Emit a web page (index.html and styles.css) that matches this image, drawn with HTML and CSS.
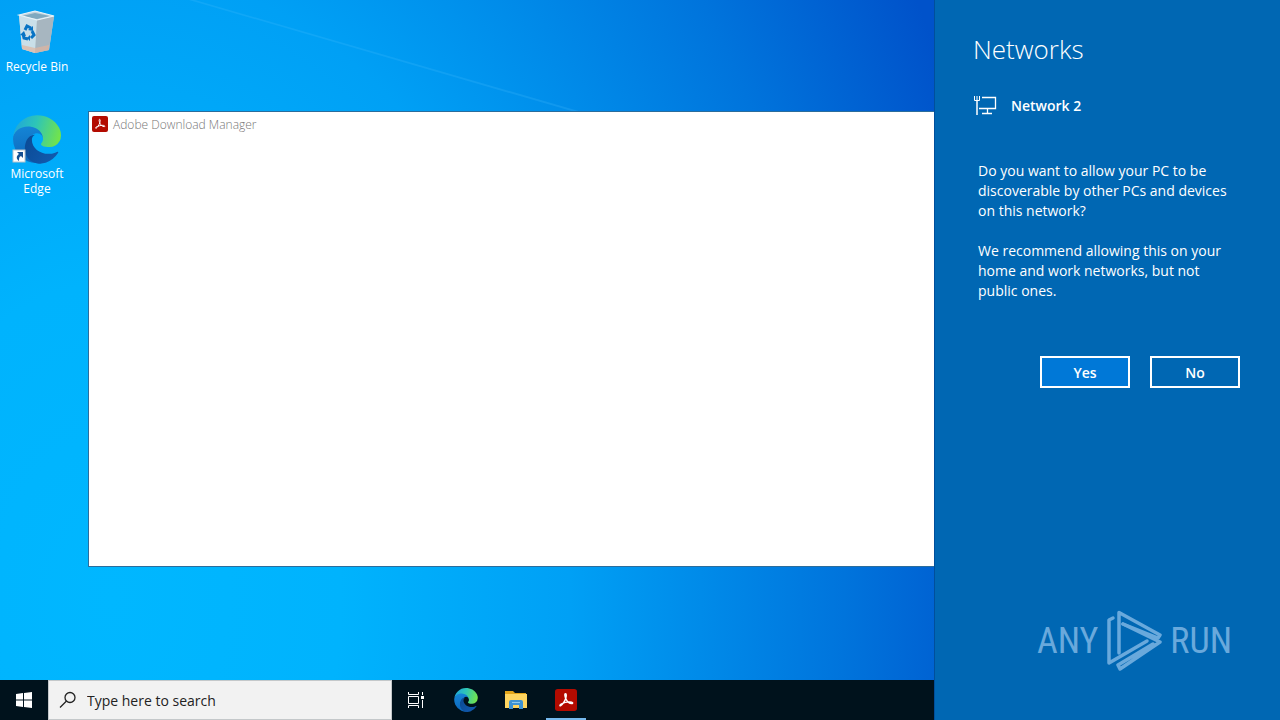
FILE: index.html
```
<!DOCTYPE html>
<html lang="en">
  <head>
    <meta charset="UTF-8" />
    <meta name="viewport" content="width=device-width, initial-scale=1.0" />
    <title>Networks</title>
    <link rel="stylesheet" href="styles.css">
  </head>
  <body>
    <!-- shared icon shapes -->
    <svg class="defs" width="0" height="0" aria-hidden="true">
      <defs>
        <linearGradient id="edgeGreen" x1="0" y1="0.3" x2="1" y2="0.5">
          <stop offset="0" stop-color="#1fa5dc" />
          <stop offset="0.45" stop-color="#2dc5b8" />
          <stop offset="1" stop-color="#72e34c" />
        </linearGradient>
        <linearGradient id="edgeBlue" x1="0.3" y1="0" x2="0.4" y2="1">
          <stop offset="0" stop-color="#1587d8" />
          <stop offset="1" stop-color="#0d66ba" />
        </linearGradient>
        <linearGradient id="edgeNavy" x1="0" y1="0" x2="1" y2="0.5">
          <stop offset="0" stop-color="#0b4a94" />
          <stop offset="1" stop-color="#1159ad" />
        </linearGradient>
        <symbol id="edge" viewBox="0 0 256 260">
          <path fill="url(#edgeBlue)" d="M105.730 241.420a79.200 79.200 0 0 1-22.740-21.340 80.720 80.720 0 0 1 29.530-120c3.120-1.470 8.450-4.130 15.540-4a32.350 32.350 0 0 1 25.690 13 31.880 31.880 0 0 1 6.360 18.660c0-.210 24.460-79.600-80-79.600-43.900 0-80 41.660-80 78.210a130.150 130.150 0 0 0 12.110 56 128 128 0 0 0 156.380 67.110 75.550 75.550 0 0 1-62.780-8z" />
          <path fill="url(#edgeNavy)" d="M235.680 195.460a93.730 93.730 0 0 1-10.540 4.710 101.870 101.870 0 0 1-35.900 6.460c-47.320 0-88.540-32.550-88.540-74.320A31.480 31.480 0 0 1 117.130 105c-42.800 1.800-53.800 46.400-53.800 72.530 0 73.880 68.090 81.370 82.760 81.370 7.910 0 19.840-2.300 27-4.560l1.310-.44a128.340 128.340 0 0 0 66.600-52.800 4 4 0 0 0-5.320-5.640z" />
          <path fill="url(#edgeGreen)" d="M152.330 148.860c-.81 1.050-3.300 2.500-3.300 5.660 0 2.610 1.700 5.120 4.720 7.230 14.380 10 41.490 8.680 41.560 8.680a59.560 59.560 0 0 0 30.270-8.350A61.380 61.380 0 0 0 256 109.190c.26-22.410-8-37.310-11.340-43.910C223.460 23.840 177.720 0 128 0A128 128 0 0 0 0 126.200c.48-36.540 36.800-66.050 80-66.050 3.500 0 23.460.34 42 10.070 16.340 8.580 24.900 18.940 30.850 29.210 6.180 10.670 7.280 24.150 7.280 29.520s-2.740 13.330-7.800 19.910z" />
        </symbol>
        <symbol id="acrobat" viewBox="0 0 24 24">
          <rect width="24" height="24" rx="3" fill="#b30b00" />
          <path fill="none" stroke="#fff" stroke-width="1.500" stroke-linejoin="round" d="M11.500 5c-1.300 0-.8 3.200.4 5.800 1.400 3 4 5.200 6.300 5.200 2 0 1.200-2-2-2-3.600 0-7.200 1-9.600 2.400-1.800 1-1.500 2.300-.5 2 1.700-.5 4.600-5 5.700-8.600C12.500 7.300 12.600 5 11.500 5z" />
        </symbol>
      </defs>
    </svg>

    <div class="screen">
      <main class="desktop">
        <svg class="ray" viewBox="0 0 420 120" aria-hidden="true">
          <path d="M24 0L410 112h7L30 0z" fill="#4fc3ff" opacity="0.2" />
        </svg>

        <div class="shortcuts">
          <a class="shortcut" href="#">
            <svg width="48" height="48" viewBox="0 0 48 48" aria-hidden="true">
              <path d="M6 6L22 2l19 5-5 34-14 3-13-4z" fill="#c4d2da" />
              <path d="M6 6l18 5-2 33-13-4z" fill="#c9dfe9" />
              <path d="M24 11l17-4-5 34-14 3z" fill="#a7b6c0" />
              <path d="M9 7l13-3 15 3-13 3z" fill="#7fa9bf" />
              <path d="M6 6L22 2l19 5-17 4z" fill="none" stroke="#e9f5fa" stroke-width="1.200" />
              <path d="M9 36l13 3 14-3v5l-14 3-13-4z" fill="#e0b5a0" opacity="0.7" />
              <g fill="none" stroke="#0873c4" stroke-width="3">
                <path d="M12 21l2-4 4 2" />
                <path d="M19 22l2 4-3 3" />
                <path d="M15 30l-4-1-1-4" />
              </g>
              <path d="M20 17v5l-5-1zM17 26v6l-3-3zM7 26l4-4 2 5z" fill="#0873c4" />
            </svg>
            <span>Recycle Bin</span>
          </a>
          <a class="shortcut" href="#">
            <svg width="50" height="50" viewBox="0 0 50 50" aria-hidden="true">
              <use href="#edge" x="1" y="1" width="48" height="49" />
              <rect x="1" y="36" width="12" height="12" fill="#fff" stroke="#b9c4cc" />
              <path d="M5 38h6v6l-2-2c-2 1-2 2-2 5-3-2-3-5 0-7z" fill="#164f91" />
            </svg>
            <span>Microsoft Edge</span>
          </a>
        </div>

        <section class="window">
          <header class="title-bar">
            <svg width="16" height="16" aria-hidden="true"><use href="#acrobat" width="16" height="16" /></svg>
            <span>Adobe Download Manager</span>
          </header>
        </section>
      </main>

      <nav class="taskbar" aria-label="Taskbar">
        <button class="start" aria-label="Start">
          <svg width="16" height="16" viewBox="0 0 16 16" fill="#fff" aria-hidden="true">
            <path d="M0 2l7-1v6.500H0zM8 1l8-1v7.500H8zM0 8.500h7V15l-7-1zM8 8.500h8V16l-8-1z" />
          </svg>
        </button>
        <label class="search">
          <svg width="18" height="18" viewBox="0 0 18 18" fill="none" stroke="#222" stroke-width="1.300" aria-hidden="true">
            <circle cx="11" cy="6.500" r="5" />
            <path d="M7.500 10L1 16.500" />
          </svg>
          <input type="text" placeholder="Type here to search" aria-label="Type here to search">
        </label>
        <div class="tasks">
          <button class="task" aria-label="Task View">
            <svg width="18" height="18" viewBox="0 0 18 18" fill="none" stroke="#fff" aria-hidden="true">
              <path d="M1.500 1v2.500h10V1M1.500 17v-2.500h10V17M1.500 5.500h10v7h-10zM15.500 1v3M15.500 9v8" />
              <path d="M14 5h3v3h-3z" fill="#fff" stroke="none" />
            </svg>
          </button>
          <button class="task" aria-label="Microsoft Edge">
            <svg width="24" height="24" aria-hidden="true"><use href="#edge" width="24" height="24" /></svg>
          </button>
          <button class="task" aria-label="File Explorer">
            <svg width="22" height="20" viewBox="0 0 22 20" aria-hidden="true">
              <path d="M0 1h8l2 2h11v5H0z" fill="#e3a51a" />
              <path d="M0 4h22v14H0z" fill="#ffd560" />
              <path d="M4 19v-7q0-2 2-2h10q2 0 2 2v7h-4v-4H8v4z" fill="#3e92d2" />
              <path d="M7 12.500h8" stroke="#8cc8ee" />
            </svg>
          </button>
          <button class="task active" aria-label="Adobe Download Manager">
            <svg width="22" height="22" aria-hidden="true"><use href="#acrobat" width="22" height="22" /></svg>
          </button>
        </div>
      </nav>

      <aside class="panel">
        <h1>Networks</h1>
        <h2>
          <svg width="24" height="22" viewBox="0 0 24 22" fill="none" stroke="#fff" aria-hidden="true">
            <path d="M1.500 1v4.500h5V1M4 1v4" />
            <path d="M4 5v15" stroke-width="1.500" />
            <path d="M9 2.500h13.500v11H6M14.500 13.500v5M9 18.500h10" stroke-width="1.300" />
          </svg>
          Network 2
        </h2>
        <div class="message">
          <p>Do you want to allow your PC to be discoverable by other PCs and devices on this network?</p>
          <p>We recommend allowing this on your home and work networks, but not public ones.</p>
        </div>
        <div class="actions">
          <button class="primary">Yes</button>
          <button>No</button>
        </div>
        <div class="brand">
          <span>ANY</span>
          <svg width="56" height="62" viewBox="0 0 56 62" fill="none" stroke="currentColor" stroke-width="3.500" stroke-linecap="round" stroke-linejoin="round" aria-hidden="true">
            <path d="M13 43V2.500L54 25l-2 3L17 14" />
            <path d="M7 8L3 10v43l38-22" />
            <path d="M17 14l37 18-40 27-2-4 35-21" />
          </svg>
          <span>RUN</span>
        </div>
      </aside>
    </div>
  </body>
</html>
```

FILE: styles.css
```
* {
  box-sizing: border-box;
}
body {
  margin: 0;
  font-family: "Open Sans", "Noto Sans", sans-serif;
  font-size: 12px;
}
button, input {
  font-family: inherit;
}
.defs {
  position: absolute;
}
.screen {
  display: grid;
  grid-template-columns: 1fr 346px;
  grid-template-rows: 1fr 40px;
  min-height: 100vh;
}

/* desktop */
.desktop {
  position: relative;
  overflow: hidden;
  background: radial-gradient(ellipse 98% 185% at 12% 88%, #00b7ff 0%, #00b3fd 25%, #00a0f5 50%, #0074dc 80%, #0052ca 100%);
}
.ray {
  position: absolute;
  top: 0;
  left: 165px;
  width: 420px;
}
.shortcuts {
  display: flex;
  flex-direction: column;
  gap: 40px;
  width: 74px;
  padding-top: 9px;
}
.shortcut {
  display: flex;
  flex-direction: column;
  align-items: center;
  gap: 2px;
  color: #fff;
  line-height: 15px;
  text-align: center;
  text-decoration: none;
}
.window {
  position: absolute;
  top: 111px;
  left: 88px;
  right: 0;
  height: 456px;
  background-color: #fff;
  border: 1px solid #2b6d9c;
  border-right: none;
}
.title-bar {
  display: flex;
  align-items: center;
  gap: 5px;
  height: 24px;
  padding-left: 3px;
  color: #777;
  font-weight: 300;
}

/* taskbar */
.taskbar {
  grid-row: 2;
  display: flex;
  background-color: #00121c;
}
.taskbar button {
  display: flex;
  align-items: center;
  justify-content: center;
  padding: 0;
  border: none;
  background: none;
}
.taskbar .start {
  width: 48px;
}
.search {
  display: flex;
  align-items: center;
  gap: 10px;
  width: 344px;
  padding: 0 10px;
  background-color: #f2f2f2;
  border: 1px solid #c4c8ca;
}
.search input {
  flex: 1;
  min-width: 0;
  padding: 0;
  border: none;
  background: none;
  font-size: 14px;
}
.search input::placeholder {
  color: #222;
}
.tasks {
  display: flex;
  gap: 10px;
  padding-left: 4px;
}
.taskbar .task {
  width: 40px;
  border-top: 2px solid transparent;
  border-bottom: 2px solid transparent;
}
.taskbar .active {
  border-bottom-color: #76b9ed;
}

/* networks panel */
.panel {
  grid-column: 2;
  grid-row: 1 / 3;
  display: flex;
  flex-direction: column;
  padding: 31px 40px 48px 38px;
  background-color: #0067b3;
  border-left: 1px solid #004f9c;
  color: #fff;
}
.panel h1 {
  margin: 0;
  font-size: 26px;
  font-weight: 300;
  line-height: 36px;
}
.panel h2 {
  display: flex;
  align-items: center;
  gap: 14px;
  margin: 27px 0 0;
  font-size: 14px;
  font-weight: 600;
  line-height: 24px;
}
.message {
  margin-top: 43px;
  padding-left: 5px;
  font-size: 14px;
  line-height: 20px;
}
.message p {
  margin: 0 0 20px;
}
.actions {
  display: flex;
  justify-content: flex-end;
  gap: 20px;
  margin-top: 35px;
}
.actions button {
  width: 90px;
  height: 32px;
  padding: 0;
  border: 2px solid #fff;
  background: none;
  color: #fff;
  font-size: 14px;
  font-weight: 600;
}
.actions .primary {
  background-color: #0078d7;
}
.brand {
  display: flex;
  align-items: center;
  justify-content: flex-end;
  gap: 8px;
  margin-top: auto;
  margin-right: 8px;
  color: #69a9dc;
  font-family: "Liberation Sans Narrow", "Roboto Condensed", "Open Sans Condensed", Roboto, sans-serif;
  font-size: 36px;
  line-height: 62px;
}
```
